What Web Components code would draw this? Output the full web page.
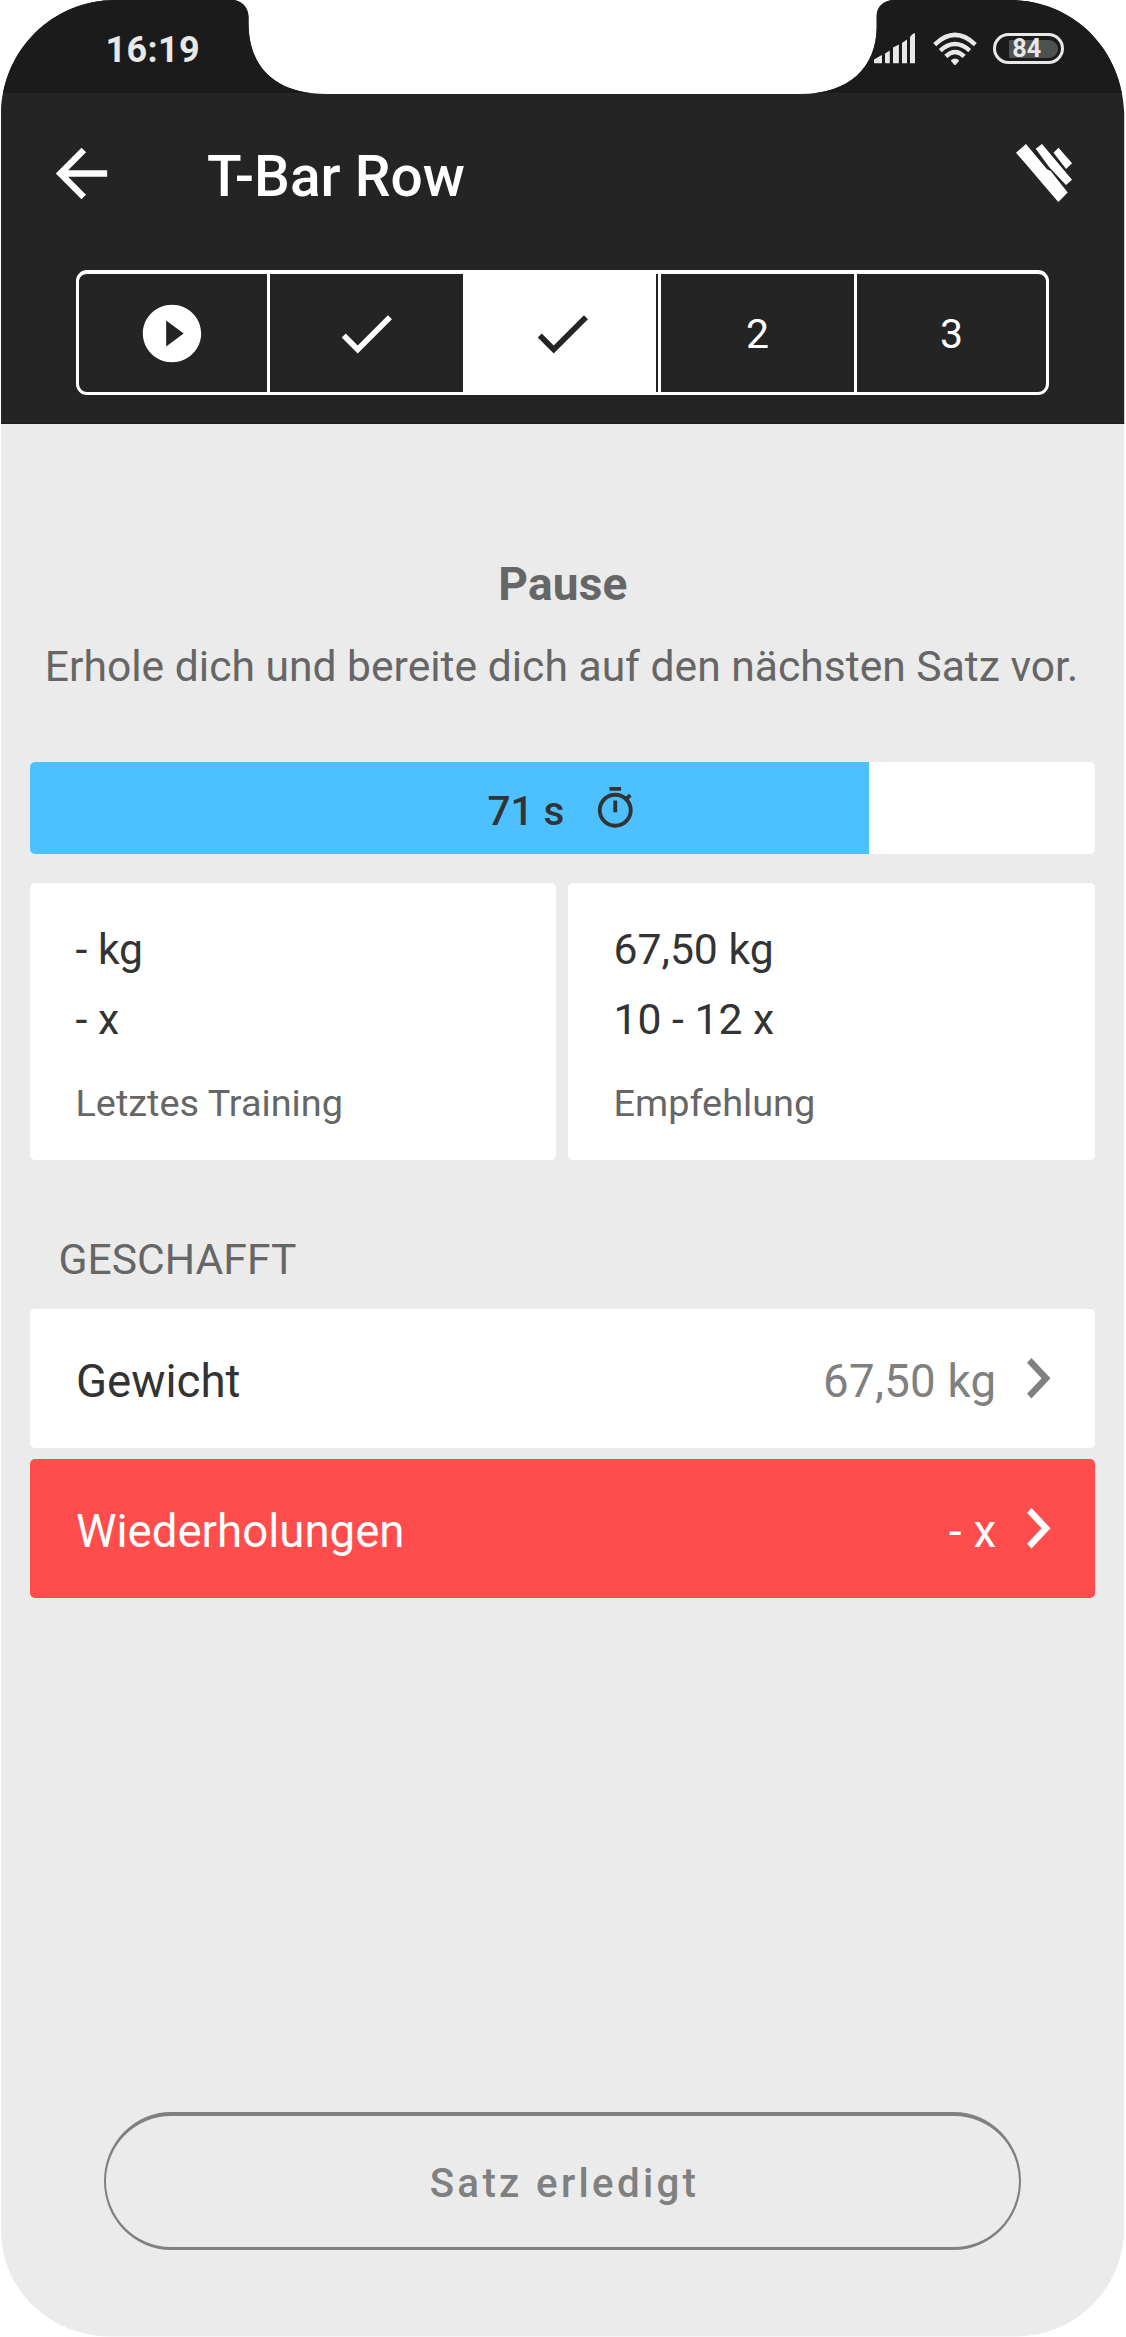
<!DOCTYPE html>
<html lang="de">
<head>
<meta charset="utf-8">
<title>T-Bar Row</title>
<style>
html,body{margin:0;background:#fff}
body{width:1126px;height:2337px;overflow:hidden;font-family:Roboto,"Liberation Sans",sans-serif}
</style>
</head>
<body>
<phone-screen>
  <status-bar time="16:19" battery="84"></status-bar>
  <app-bar>T-Bar Row</app-bar>
  <set-steps>
    <set-step kind="play"></set-step>
    <set-step kind="done"></set-step>
    <set-step kind="done" active></set-step>
    <set-step>2</set-step>
    <set-step>3</set-step>
  </set-steps>
  <main slot="body">
    <rest-intro><span slot="title">Pause</span>Erhole dich und bereite dich auf den nächsten Satz vor.</rest-intro>
    <rest-timer>71 s</rest-timer>
    <stat-pair>
      <stat-card label="Letztes Training"><span slot="weight">- kg</span><span slot="reps">- x</span></stat-card>
      <stat-card label="Empfehlung"><span slot="weight">67,50 kg</span><span slot="reps">10 - 12 x</span></stat-card>
    </stat-pair>
    <section-title>GESCHAFFT</section-title>
    <value-row label="Gewicht">67,50 kg</value-row>
    <value-row label="Wiederholungen" alert>- x</value-row>
    <pill-button>Satz erledigt</pill-button>
  </main>
</phone-screen>
<script>
const define = (name, html) => customElements.define(name, class extends HTMLElement {
  constructor() {
    super();
    const t = document.createElement('template');
    t.innerHTML = html;
    this.attachShadow({mode: 'open'}).append(t.content.cloneNode(true));
  }
  connectedCallback() {
    this.shadowRoot.querySelectorAll('[data-attr]').forEach(n => {
      n.textContent = this.getAttribute(n.dataset.attr) || '';
    });
  }
});

define('phone-screen', `
<style>
:host{display:block;width:1126px;height:2337px;background:#ebebeb;
 clip-path:path("M1 112 C3 50 52 0 116 0 L232 0 C241 0 248.5 7 248.5 17 L248.5 24 C249 68 276 94 326 94 L800 94 C850 94 876 67 876.7 28 L876.7 16 C876.7 7 883 0 895 0 L1010 0 C1074 0 1122 50 1124.2 112 L1124.2 2228 C1124.2 2286 1078 2336 1016 2336.5 L110 2336.5 C50 2336 1 2290 1 2230 Z")}
.top{box-sizing:border-box;height:424px;background:#242424;border-bottom:1px solid #1e1c1e}
</style>
<div class="top"><slot></slot></div>
<slot name="body"></slot>`);

define('status-bar', `
<style>
:host{display:flex;align-items:center;box-sizing:border-box;height:93px;padding:4px 62.5px 0 105.6px;background:#1b1b1b;color:#e8e8e8}
.time{font-weight:700;font-size:36px;line-height:42px;letter-spacing:.3px;padding-top:2px;flex:1}
.sig{margin-right:17px}.wifi{margin-right:16px}
svg{display:block;flex:none}
.bat{box-sizing:border-box;width:71px;height:31px;border:3px solid #e8e8e8;border-radius:16px;padding:4px 3px 3px 13px}
.fill{height:18px;width:49px;background:#4f5150;border-radius:1px 9px 9px 1px;font-weight:700;font-size:25.2px;line-height:18.6px;box-sizing:border-box;padding-left:3.7px}
</style>
<span class="time" data-attr="time"></span>
<svg class="sig" width="42" height="31" viewBox="0 0 42 31" fill="#e8e8e8"><path d="M0 30v-3.500L6 23l2-1v8.300H.8zM11 20.500l4.800-3V30.300H11.800L11 29.500zM19 14.500l5.900-3V30.300H19zM28 10l5-3.500V30.300H28zM36 4l2-2.500 3-1.500V30.300H36z"/></svg>
<svg class="wifi" width="44" height="34" viewBox="0 0 44 34" fill="none" stroke="#e8e8e8" stroke-width="4.400"><path d="M1.700 12.600Q22-6.800 42.300 12.600M7.300 18.600Q22 5.500 36.700 18.600M12.800 24.400Q22 15.500 31.200 24.400"/><path d="M18 28.200Q22 24.800 26 28.200V29L23 32.400Q22 33.400 21 32.400L18 29z" fill="#e8e8e8" stroke="none"/></svg>
<div class="bat"><div class="fill" data-attr="battery"></div></div>`);

define('app-bar', `
<style>
:host{display:flex;align-items:center;height:160px;padding:0 53px 0 43px;color:#fff}
.t{flex:1;margin:0;padding:7px 0 0 87px;font-weight:500;font-size:56.8px;line-height:70px}
svg{display:block;flex:none}
</style>
<svg width="77" height="77" viewBox="0 0 24 24" fill="currentColor"><path d="M20 11H7.830l5.590-5.590L12 4l-8 8 8 8 1.410-1.410L7.830 13H20z"/></svg>
<h1 class="t"><slot></slot></h1>
<svg width="57" height="58" viewBox="0 0 57 58" fill="currentColor"><path d="M0 8.700L10 0 31 25.300l3.700 1.700L51.700 48.500 42.300 58 28.300 41.700 10.700 21zM19.700 4.700L26 0l30 35.700-6 5.300L36.500 26.700l-3.200-3.500zM37.500 8.700L42.500 3.700l13.600 15.600-6 5.700z"/></svg>`);

define('set-steps', `
<style>
:host{display:flex;box-sizing:border-box;width:973px;height:125px;margin:17px 0 0 76px;border:3px solid #fff;border-top-width:4px;border-radius:11px}
</style><slot></slot>`);

customElements.define('set-step', class extends HTMLElement {
  connectedCallback() {
    const kind = this.getAttribute('kind');
    const play = '<svg width="70" height="69" viewBox="0 0 24 24" preserveAspectRatio="none" fill="currentColor"><path d="M12 2C6.480 2 2 6.480 2 12s4.480 10 10 10 10-4.480 10-10S17.520 2 12 2zm-2 14.500v-9l6 4.500z"/></svg>';
    const done = '<svg width="68.500" height="69" viewBox="0 0 24 24" fill="currentColor"><path d="M9 16.170L4.830 12l-1.420 1.410L9 19 21 7l-1.410-1.410z"/></svg>';
    this.attachShadow({mode: 'open'}).innerHTML = `
<style>
:host{display:flex;flex:0 0 196px;box-sizing:border-box;align-items:center;justify-content:center;border-left:3px solid #fff;color:#fff;font-size:41px;line-height:48px}
:host(:first-child){flex-basis:188px;border-left:0;padding-right:3px}
:host(:nth-child(3)){flex-basis:193px;margin-right:2px;padding-left:3px}
:host(:last-child){flex:1}
:host([active]){background:#fff;color:#242424}
svg{display:block;flex:none}
.n{padding-top:2px}
</style>${kind === 'play' ? play : kind === 'done' ? done : '<span class="n"><slot></slot></span>'}`;
  }
});

define('rest-intro', `
<style>
:host{display:block;padding-top:130px;color:#666;text-align:center}
.h{font-weight:700;font-size:46px;line-height:60px;letter-spacing:.2px}
.p{font-size:42.620px;line-height:60px;padding:22px 3px 0 0;white-space:nowrap}
</style>
<div class="h"><slot name="title"></slot></div><div class="p"><slot></slot></div>`);

define('rest-timer', `
<style>
:host{display:flex;align-items:center;box-sizing:border-box;width:1065px;height:92px;margin:66px 0 0 30px;padding-left:457.400px;border-radius:5px;
 background:linear-gradient(90deg,#4dc1ff 839px,#fff 839px);color:#333;font-weight:500;font-size:40.500px;line-height:48px}
span{width:105px;padding-top:6px}
svg{display:block}
</style>
<span><slot></slot></span>
<svg width="46.500" height="46.500" viewBox="0 0 24 24" fill="currentColor"><path d="M15 1H9v2h6V1zm-4 13h2V8h-2v6zm8.030-6.610l1.420-1.420c-.430-.510-.900-.990-1.410-1.410l-1.420 1.420C16.070 4.740 14.120 4 12 4c-4.970 0-9 4.030-9 9s4.020 9 9 9 9-4.030 9-9c0-2.120-.740-4.070-1.970-5.610zM12 20c-3.870 0-7-3.130-7-7s3.130-7 7-7 7 3.130 7 7-3.130 7-7 7z"/></svg>`);

define('stat-pair', `
<style>:host{display:grid;grid-template-columns:526px 527px;gap:12px;margin:29px 0 0 30px;height:277px}</style><slot></slot>`);

define('stat-card', `
<style>
:host{display:block;box-sizing:border-box;padding:30.500px 0 0 45.500px;background:#fff;border-radius:5px;color:#333;font-size:42.700px;line-height:70px}
.l{padding-top:14px;font-size:37.850px;line-height:70px;color:#666}
</style>
<div><slot name="weight"></slot></div><div><slot name="reps"></slot></div><div class="l" data-attr="label"></div>`);

define('section-title', `
<style>:host{display:block;padding:69px 0 0 58.600px;font-size:42.600px;line-height:60px;color:#666;height:80px}</style><slot></slot>`);

define('value-row', `
<style>
:host{display:flex;align-items:center;box-sizing:border-box;width:1065px;height:139px;margin:0 0 11px 30px;padding:0 44.500px 0 46px;background:#fff;border-radius:5px;color:#333;font-size:45.600px;line-height:56px;--value:#808080}
:host([alert]){background:#ff4d4d;color:#fff;--value:#fff}
.l{flex:1;padding-top:7px}
.v{padding:7px 30px 0 0;color:var(--value);letter-spacing:.3px}
svg{display:block;fill:var(--value)}
</style>
<span class="l" data-attr="label"></span><span class="v"><slot></slot></span>
<svg width="24" height="41" viewBox="0 0 24 41"><path d="M0 4.700L4.500 0 23.500 20.300 4.500 40.500 0 35.800 14.600 20.300z"/></svg>`);

define('pill-button', `
<style>
:host{display:flex;align-items:center;justify-content:center;box-sizing:border-box;width:917px;height:138px;margin:514px 0 0 104px;border:solid #808080;border-width:4px 2.500px 3px;border-radius:67px/69px;color:#808080;font-weight:500;font-size:40.300px;line-height:48px;letter-spacing:3.300px}
span{padding-top:5px;padding-left:4px}
</style><span><slot></slot></span>`);
</script>
</body>
</html>
